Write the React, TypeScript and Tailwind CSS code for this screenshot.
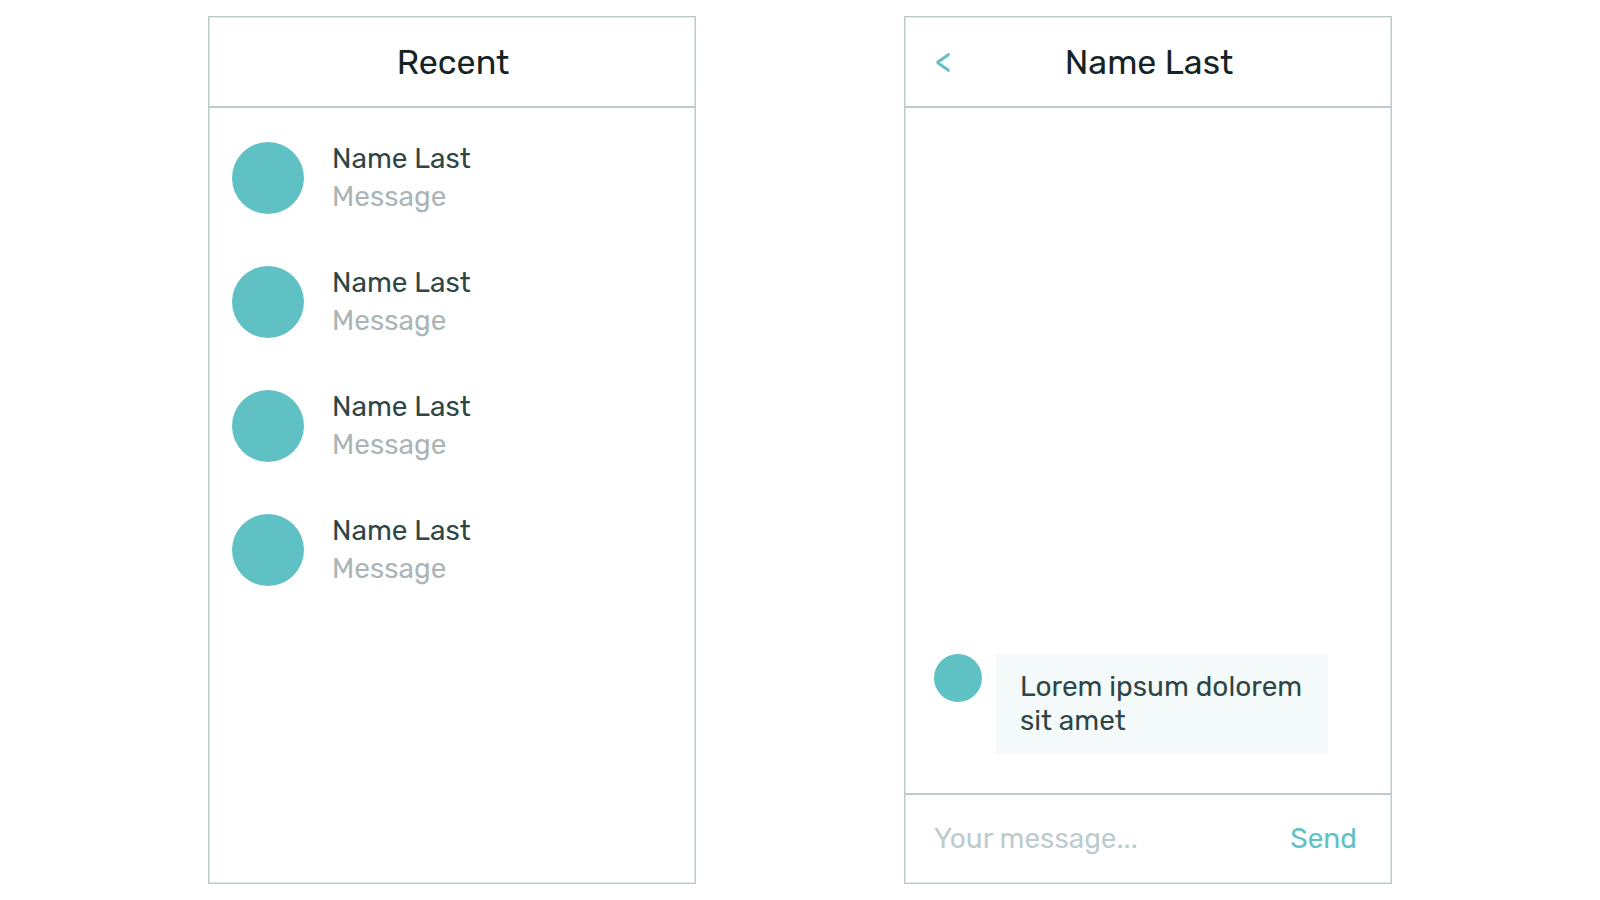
const people = [1, 2, 3, 4];

export default function App() {
  return (
    <main className="flex h-[900px] w-[1600px] gap-[208px] bg-white pt-4 pl-[208px] font-['Rubik','Roboto',sans-serif] text-[28px] text-[#2e4646] antialiased">
      <section className="flex h-[868px] w-[488px] flex-col border border-[#bccccd] py-px shadow-[inset_0_0_0_1px_#dde5e6]">
        <header className="flex h-[90px] items-center justify-center border-b-2 border-[#bccccd] pl-[2px] text-[34px] text-[#142424]">
          <h1>Recent</h1>
        </header>
        <ul className="flex flex-col gap-[52px] pt-[34px] pl-[23px]">
          {people.map((id) => (
            <li key={id} className="flex h-[72px] gap-[28px]">
              <div className="size-[72px] rounded-full bg-[#60c1c5]" />
              <div className="-mt-[2px] leading-[38px]">
                <p>Name Last</p>
                <p className="text-[#abb5b5]">Message</p>
              </div>
            </li>
          ))}
        </ul>
      </section>
      <section className="flex h-[868px] w-[488px] flex-col border border-[#bccccd] py-px shadow-[inset_0_0_0_1px_#dde5e6]">
        <header className="grid h-[90px] grid-cols-[121px_1fr_119px] items-center border-b-2 border-[#bccccd] text-[34px] text-[#142424]">
          <button className="pb-[2px] pl-[30px] text-left text-[#60c1c5]">&lt;</button>
          <h1 className="text-center">Name Last</h1>
        </header>
        <div className="flex flex-1 items-end gap-[14px] pb-[39px] pl-[29px]">
          <div className="mb-[52px] size-[48px] rounded-full bg-[#60c1c5]" />
          <p className="h-[100px] w-[332px] bg-[#f4fafa] px-6 pt-[16px] leading-[34px]">Lorem ipsum dolorem sit amet</p>
        </div>
        <footer className="flex h-[89px] items-center justify-between border-t-2 border-[#bccccd] pt-px pr-[34px] pl-[29px]">
          <span className="text-[#bccccd]">Your message...</span>
          <button className="text-[#60c1c5]">Send</button>
        </footer>
      </section>
    </main>
  );
}
